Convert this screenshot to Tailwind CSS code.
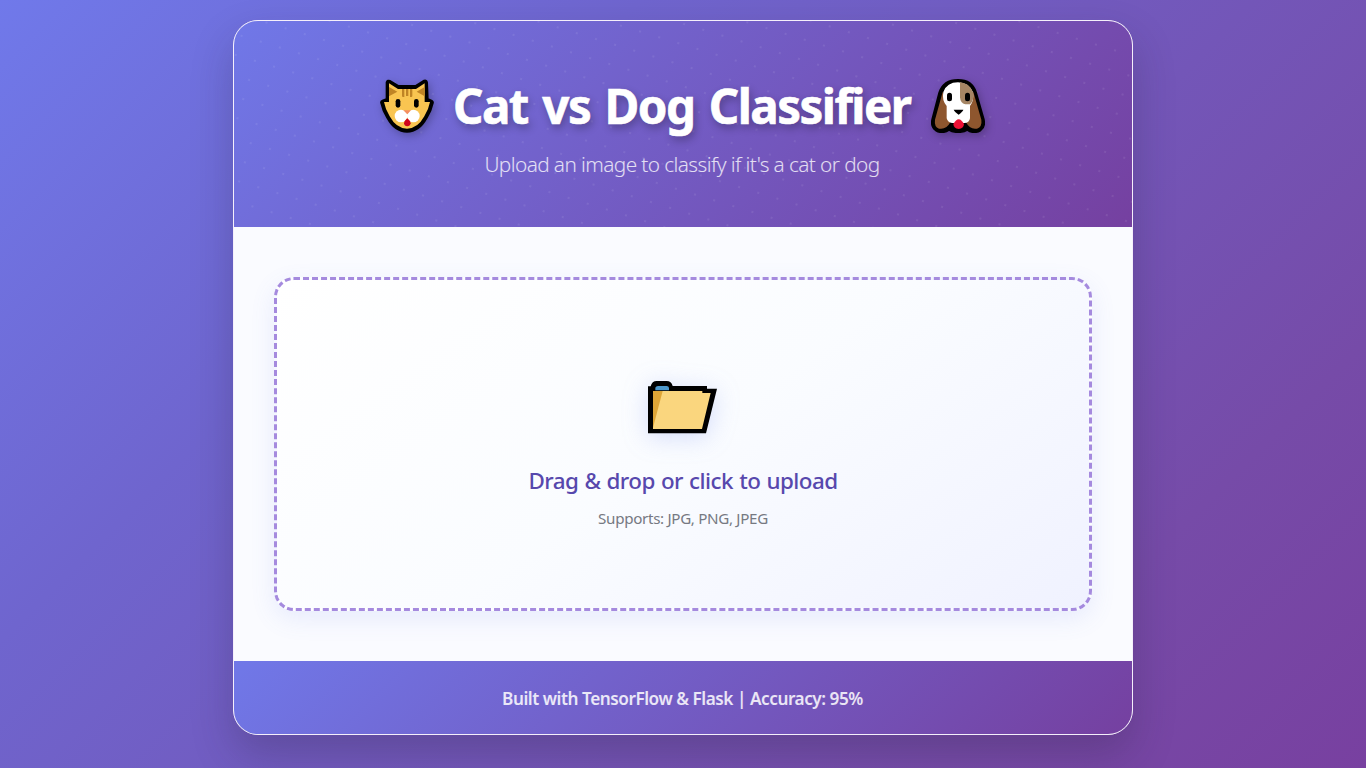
<!DOCTYPE html>
<html lang="en">
<head>
<meta charset="utf-8">
<title>Cat vs Dog Classifier</title>
<script src="https://cdn.jsdelivr.net/npm/@tailwindcss/browser@4"></script>
</head>
<body class="h-screen overflow-hidden bg-linear-[135deg,#7079ea_0%,#6f65ce_30%,#764ba8_80%,#7840a0_100%] px-[233px] pt-5 font-['Segoe_UI','Noto_Sans',sans-serif]">
<div class="flex h-[715px] w-[900px] flex-col overflow-hidden rounded-[25px] border border-[#f5effb] bg-[#fafbff] shadow-[0_20px_40px_rgba(40,30,60,0.25)]">
  <header class="relative flex h-[206px] shrink-0 flex-col items-center overflow-hidden bg-linear-[135deg,#7078e8_0%,#7540a0_100%]">
    <div class="absolute -top-1/2 -left-1/2 h-[200%] w-[200%] rotate-[16.9deg] bg-[radial-gradient(circle,rgba(255,255,255,0.08)_1px,transparent_1px)] bg-size-[20px_20px]"></div>
    <h1 class="relative mt-[50px] flex h-[70px] w-full items-center justify-center gap-[19px] pr-px text-white">
      <svg class="size-[54px] shrink-0 drop-shadow-[2px_3px_4px_rgba(0,0,0,0.25)]" viewBox="30 27 162 162">
        <path d="M51 37Q53 31 60 34L85 49H137L163 33Q169 31 170 38L172 88L184 93Q189 95 187 100Q183 121 169 143Q147 184 111 184Q75 184 53 143Q39 121 35 100Q33 95 38 93L51 88Z" stroke="#000" stroke-width="8" stroke-linejoin="round"/>
        <path d="M57 40L84 57H138L164 40V96H180Q176 118 163 139Q143 176 111 176Q79 176 59 139Q46 118 42 96H57Z" fill="#f9c551"/>
        <path d="M57 51V79L82 65ZM164 51V79L140 65ZM96 57h7v24h-4q-3 0-3-4zM108 57h7v21h-7zM120 57h7v20q0 4-3 4h-4z" fill="#bf8425"/>
        <rect x="77" y="87" width="14" height="26" rx="7"/><rect x="132" y="87" width="14" height="26" rx="7"/>
        <circle cx="93" cy="138" r="19" fill="#fff"/><circle cx="130" cy="138" r="19" fill="#fff"/>
        <path d="M100 121H123L112 133Z" fill="#f48e62"/>
        <path d="M112 145Q122 153 122 160Q120 169 112 169Q103 169 102 160Q102 153 112 145Z" fill="#d0021b"/>
      </svg>
      <span class="inline-block w-[459px] text-[47.5px] leading-[70px] font-bold tracking-[-1.55px] whitespace-nowrap [word-spacing:3.6px] [-webkit-text-stroke:0.6px_white] [text-shadow:2px_4px_8px_rgba(0,0,0,0.3)]">Cat vs Dog Classifier</span>
      <svg class="size-[54px] shrink-0 drop-shadow-[2px_3px_4px_rgba(0,0,0,0.25)]" viewBox="30 27 162 162">
        <path d="M111 31Q153 31 164 68L187 148Q192 170 178 180Q158 192 139 178Q128 186 111 185Q95 186 84 178Q64 192 45 180Q30 170 35 148L56 68Q68 31 111 31Z" stroke="#000" stroke-width="8"/>
        <path d="M65 66L42 149Q39 170 54 176Q76 180 88 157L82 100ZM157 66L181 149Q184 170 168 176Q147 180 135 157L140 100Z" fill="#8e562e"/>
        <path d="M111 37Q143 37 156 67Q160 92 147 108V145Q145 159 130 159H93Q80 157 77 145V108Q62 91 67 66Q78 37 111 37Z" fill="#fff"/>
        <path d="M117 37Q145 39 156 67Q161 91 147 103H133Q118 100 117 82Z" fill="#a58564"/>
        <rect x="78" y="68" width="15" height="26" rx="7.5"/><rect x="132" y="68" width="15" height="26" rx="7.5"/>
        <path d="M98 119H127Q126 124 113 134Q100 125 98 119Z"/>
        <path d="M113 148Q121 148 129 162Q128 176 113 177Q98 176 97 162Q105 148 113 148Z" fill="#ed1135"/>
      </svg>
    </h1>
    <p class="relative mt-[7px] pr-0.5 text-[20.8px] leading-[32px] font-light tracking-[-0.6px] text-white/80">Upload an image to classify if it's a cat or dog</p>
  </header>
  <main class="flex min-h-0 flex-1 flex-col px-10 py-[50px]">
    <div class="flex flex-1 flex-col items-center rounded-[20px] border-[3px] border-dashed border-[#a58ade] bg-linear-[145deg,#ffffff_0%,#fafcff_50%,#f0f2ff_100%] pt-[101px] shadow-[0_8px_25px_rgba(102,126,234,0.12)]">
      <svg class="mr-0.5 h-[53px] w-[69px] drop-shadow-[0_4px_12px_rgba(102,126,234,0.25)]" viewBox="54 48 207 159">
        <path d="M54 64H62Q66 48 80 48H110Q124 48 128 63H231V71H261L228 205H54Z"/>
        <path d="M76 76V68Q78 63 84 63H110Q116 63 117 68V76Z" fill="#4c97ca"/>
        <path d="M69 78H217V84H242L216 192H69Z" fill="#fad67e"/>
        <path d="M69 78H98L69 188Z" fill="#dfa637"/>
      </svg>
      <p class="mt-[30px] text-[22.4px] leading-[34px] font-medium tracking-[-0.53px] text-[#5748ad] [word-spacing:0.8px]">Drag &amp; drop or click to upload</p>
      <p class="mt-[9px] text-[15.2px] leading-[22px] tracking-[-0.33px] text-[#767982]">Supports: JPG, PNG, JPEG</p>
    </div>
  </main>
  <footer class="flex h-[73px] shrink-0 items-center justify-center bg-linear-[135deg,#7078e8_0%,#7540a0_100%] pt-0.5 pr-px text-[17.2px] font-semibold tracking-[-0.46px] text-white/85">Built with TensorFlow &amp; Flask | Accuracy: 95%</footer>
</div>
</body>
</html>
